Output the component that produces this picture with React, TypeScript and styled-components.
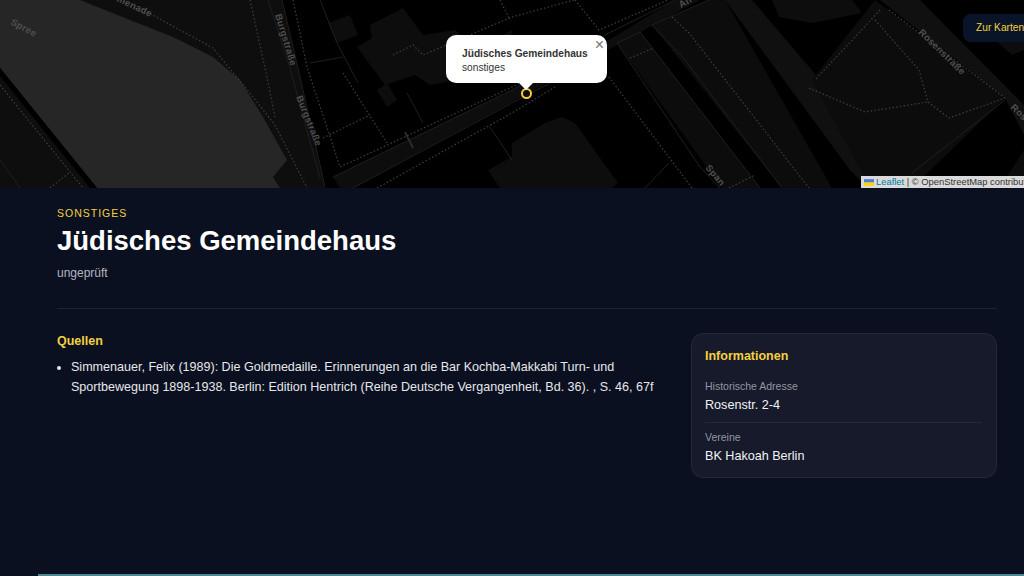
import React from "react";
import styled, { createGlobalStyle } from "styled-components";

const GlobalStyle = createGlobalStyle`
  html, body {
    margin: 0;
    padding: 0;
    height: 576px;
    overflow: hidden;
    background: #0b1021;
    font-family: "Liberation Sans", Arial, sans-serif;
  }
`;

const Page = styled.div`
  height: 576px;
  display: flex;
  flex-direction: column;
  background: #0b1021;
`;

const MapArea = styled.div`
  position: relative;
  height: 188px;
  flex: none;
  overflow: hidden;
  background: #000;
`;

const MapDrawing = styled.svg`
  display: block;
  width: 100%;
  height: 100%;
`;

const MapLabel = styled.text`
  font-family: "Liberation Sans", Arial, sans-serif;
  font-size: 9.5px;
  font-weight: 700;
  fill: #4f4f4f;
  letter-spacing: 0.3px;
`;

const Popup = styled.div`
  position: absolute;
  left: 446px;
  top: 35px;
  width: 161px;
  height: 48px;
  box-sizing: border-box;
  padding: 12px 0 0 16px;
  background: #fff;
  border-radius: 10px;
  color: #333;
  font-size: 10.2px;
  line-height: 14px;

  &::after {
    content: "";
    position: absolute;
    left: 73px;
    bottom: -7px;
    border-left: 7px solid transparent;
    border-right: 7px solid transparent;
    border-top: 7px solid #fff;
  }
`;

const PopupTitle = styled.strong`
  display: block;
  font-weight: 700;
`;

const PopupClose = styled.span`
  position: absolute;
  top: 2px;
  right: 3px;
  font-size: 16px;
  line-height: 16px;
  color: #757575;
`;

const Marker = styled.span`
  position: absolute;
  left: 521px;
  top: 88px;
  width: 11px;
  height: 11px;
  box-sizing: border-box;
  border: 2px solid #f4d03f;
  border-radius: 50%;
`;

const MapButton = styled.div`
  position: absolute;
  left: 963px;
  right: 0;
  top: 14px;
  height: 28px;
  box-sizing: border-box;
  padding-left: 13px;
  line-height: 28px;
  border-radius: 8px 0 0 8px;
  background: #0a1428;
  color: #f4d03f;
  font-size: 10.2px;
  white-space: nowrap;
  overflow: hidden;
`;

const Attribution = styled.div`
  position: absolute;
  left: 861px;
  right: 0;
  top: 176px;
  height: 12px;
  box-sizing: border-box;
  padding-left: 3px;
  display: flex;
  align-items: center;
  gap: 2px;
  background: rgba(255, 255, 255, 0.85);
  color: #333;
  font-size: 9.4px;
  line-height: 12px;
  white-space: nowrap;
  overflow: hidden;
`;

const AttributionLink = styled.span`
  color: #0078a8;
`;

const Flag = styled.svg`
  width: 10px;
  height: 7px;
  flex: none;
`;

const Content = styled.main`
  flex: 1;
  padding: 19px 27px 0 57px;
`;

const Header = styled.header`
  height: 101px;
  border-bottom: 1px solid #1e2435;
`;

const Category = styled.div`
  color: #f4d03f;
  font-size: 10.5px;
  line-height: 13px;
  letter-spacing: 1px;
  text-transform: uppercase;
`;

const Title = styled.h1`
  margin: 5px 0 0;
  color: #fff;
  font-size: 27.5px;
  line-height: 32px;
  font-weight: 700;
`;

const Status = styled.div`
  margin-top: 8px;
  color: #b4b6bd;
  font-size: 12px;
  line-height: 16px;
`;

const Columns = styled.div`
  display: flex;
  justify-content: space-between;
  align-items: flex-start;
  padding-top: 24px;
`;

const Sources = styled.section`
  width: 610px;
`;

const SectionHeading = styled.h2`
  margin: 0;
  color: #f4d03f;
  font-size: 12.5px;
  line-height: 16px;
  font-weight: 700;
`;

const SourceList = styled.ul`
  margin: 9px 0 0;
  padding: 0 0 0 14px;
  color: #e6e7ea;
  font-size: 12.55px;
  line-height: 19.5px;
`;

const InfoCard = styled.aside`
  width: 306px;
  height: 145px;
  box-sizing: border-box;
  padding: 14px 14px 0 13px;
  background: #161a2b;
  border: 1px solid #23283a;
  border-radius: 12px;
`;

const InfoRow = styled.div<{ $divided?: boolean }>`
  padding-top: ${({ $divided }) => ($divided ? "8px" : "0")};
  margin-top: ${({ $divided }) => ($divided ? "8px" : "16px")};
  border-top: ${({ $divided }) => ($divided ? "1px solid #23283a" : "none")};
`;

const InfoLabel = styled.div`
  color: #9497a1;
  font-size: 10.5px;
  line-height: 13px;
`;

const InfoValue = styled.div`
  margin-top: 4px;
  color: #f2f3f5;
  font-size: 12.6px;
  line-height: 17px;
`;

const BottomBar = styled.div`
  flex: none;
  height: 2px;
  margin-left: 38px;
  background: #4c8796;
`;

const water = "0,0 80,0 130,20 173,37 213,57 240,80 263,117 287,160 273,177 280,188 97,188 0,68";

const App: React.FC = () => {
  return (
    <Page>
      <GlobalStyle />
      <MapArea>
        <MapDrawing viewBox="0 0 1024 188">
          {/* river bank and street strips */}
          <polygon points="80,0 282,0 300,77 325,188 97,188" fill="#0e0e0e" />
          <polygon points={water} fill="#262626" />
          <polygon points="0,68 97,188 0,188" fill="#0e0e0e" />
          <polygon points="0,68 97,188 90,188 0,76" fill="#000" />
          <polygon points="333,177 512,90 609,40 675,0 700,0 353,188 340,188" fill="#0d0d0d" />
          <polygon points="617,43 640,32 760,188 722,188" fill="#0c0c0c" />
          <polygon points="652,25 709,0 725,0 832,188 782,188" fill="#0c0c0c" />
          <polygon points="725,0 752,0 880,150 868,188 850,170" fill="#101010" />
          <polygon points="812,80 875,0 1005,98 912,188 870,188" fill="#0c0c0c" />
          <polygon points="880,0 920,0 1024,105 1024,135 1005,98" fill="#101010" />
          <polygon points="1000,188 1024,150 1024,188" fill="#0c0c0c" />
          {/* buildings */}
          <g fill="#0d0d0d">
            <polygon points="328,23 350,15 358,35 337,43" />
            <polygon points="357,47 372,38 370,25 403,8 423,35 455,30 478,48 512,30 512,70 430,85 415,75 385,85" />
            <polygon points="377,90 387,83 397,100 387,107" />
            <polygon points="488,170 512,157 512,188 500,188" />
            <polygon points="512,143 545,123 562,117 575,123 618,183 612,188 512,188" />
            <polygon points="772,0 779,17 812,23 862,13 852,0" />
            <polygon points="995,40 1024,25 1024,50 1012,55" />
          </g>
          {/* street edges */}
          <g fill="none" stroke="#1f1f1f" strokeWidth="1">
            <path d="M268 0 L290 68 L320 178" />
            <path d="M282 0 L300 77 L325 187" />
            <path d="M333 177 L512 90 L609 33 L675 0" />
            <path d="M353 188 L512 103 L590 62" />
            <path d="M320 0 L337 43 L358 83" />
            <path d="M310 63 L343 57" />
            <path d="M407 93 L423 123" />
            <path d="M405 132 L413 148" stroke="#2c2c2c" strokeWidth="2" />
            <path d="M490 127 L512 160" />
            <path d="M617 43 L640 32 L760 188" />
            <path d="M617 43 L700 167 L720 188" />
            <path d="M652 25 L709 0" />
            <path d="M652 25 L685 60 L782 188" />
            <path d="M1005 100 L912 173" />
            <path d="M645 188 L669 163" />
            <path d="M0 160 L20 188" />
          </g>
          {/* footpaths */}
          <g fill="none" stroke="#3f3f3f" strokeWidth="1.2" strokeDasharray="1.5 2.2">
            <path d="M147 12 L213 48 L253 97 L275 125 L307 188" />
            <path d="M250 0 L267 77 L275 117" />
            <path d="M293 0 L307 67 L340 167 L512 87 L575 55" />
            <path d="M377 188 L512 113 L555 87" />
            <path d="M0 85 L83 188" />
            <path d="M50 188 L70 172" />
            <path d="M323 138 L370 115" />
            <path d="M343 73 L387 143" />
            <path d="M393 55 L413 45 L423 55 L512 17 L574 0" />
            <path d="M500 0 L510 20" />
            <path d="M575 0 L599 30 L668 0" />
            <path d="M609 77 L692 188" />
            <path d="M630 58 L654 48" />
            <path d="M672 17 L689 33 L809 188" />
            <path d="M729 188 L755 175" />
            <path d="M880 10 L815 80" />
            <path d="M875 20 L919 70 L928 102 L949 118 L1005 98" />
            <path d="M809 88 L865 112 L928 102" />
            <path d="M889 10 L1005 98" />
          </g>
          <MapLabel transform="translate(10 24) rotate(28)">Spree</MapLabel>
          <MapLabel transform="translate(101 -6) rotate(25)">Promenade</MapLabel>
          <MapLabel transform="translate(275 15) rotate(73)">Burgstraße</MapLabel>
          <MapLabel transform="translate(296 97) rotate(68)">Burgstraße</MapLabel>
          <MapLabel transform="translate(918 33) rotate(44)">Rosenstraße</MapLabel>
          <MapLabel transform="translate(1010 108) rotate(44)">Ros</MapLabel>
          <MapLabel transform="translate(705 168) rotate(50)">Span</MapLabel>
          <MapLabel transform="translate(681 8) rotate(-30)">An</MapLabel>
        </MapDrawing>
        <Marker />
        <Popup>
          <PopupTitle>Jüdisches Gemeindehaus</PopupTitle>
          sonstiges
          <PopupClose>×</PopupClose>
        </Popup>
        <MapButton>Zur Karten</MapButton>
        <Attribution>
          <Flag viewBox="0 0 12 8">
            <rect width="12" height="4" fill="#4C7BE1" />
            <rect y="4" width="12" height="4" fill="#FFD500" />
          </Flag>
          <span>
            <AttributionLink>Leaflet</AttributionLink> | © OpenStreetMap contributors
          </span>
        </Attribution>
      </MapArea>
      <Content>
        <Header>
          <Category>Sonstiges</Category>
          <Title>Jüdisches Gemeindehaus</Title>
          <Status>ungeprüft</Status>
        </Header>
        <Columns>
          <Sources>
            <SectionHeading>Quellen</SectionHeading>
            <SourceList>
              <li>
                Simmenauer, Felix (1989): Die Goldmedaille. Erinnerungen an die Bar Kochba-Makkabi Turn- und
                Sportbewegung 1898-1938. Berlin: Edition Hentrich (Reihe Deutsche Vergangenheit, Bd. 36). , S. 46, 67f
              </li>
            </SourceList>
          </Sources>
          <InfoCard>
            <SectionHeading>Informationen</SectionHeading>
            <InfoRow>
              <InfoLabel>Historische Adresse</InfoLabel>
              <InfoValue>Rosenstr. 2-4</InfoValue>
            </InfoRow>
            <InfoRow $divided>
              <InfoLabel>Vereine</InfoLabel>
              <InfoValue>BK Hakoah Berlin</InfoValue>
            </InfoRow>
          </InfoCard>
        </Columns>
      </Content>
      <BottomBar />
    </Page>
  );
};

export default App;
